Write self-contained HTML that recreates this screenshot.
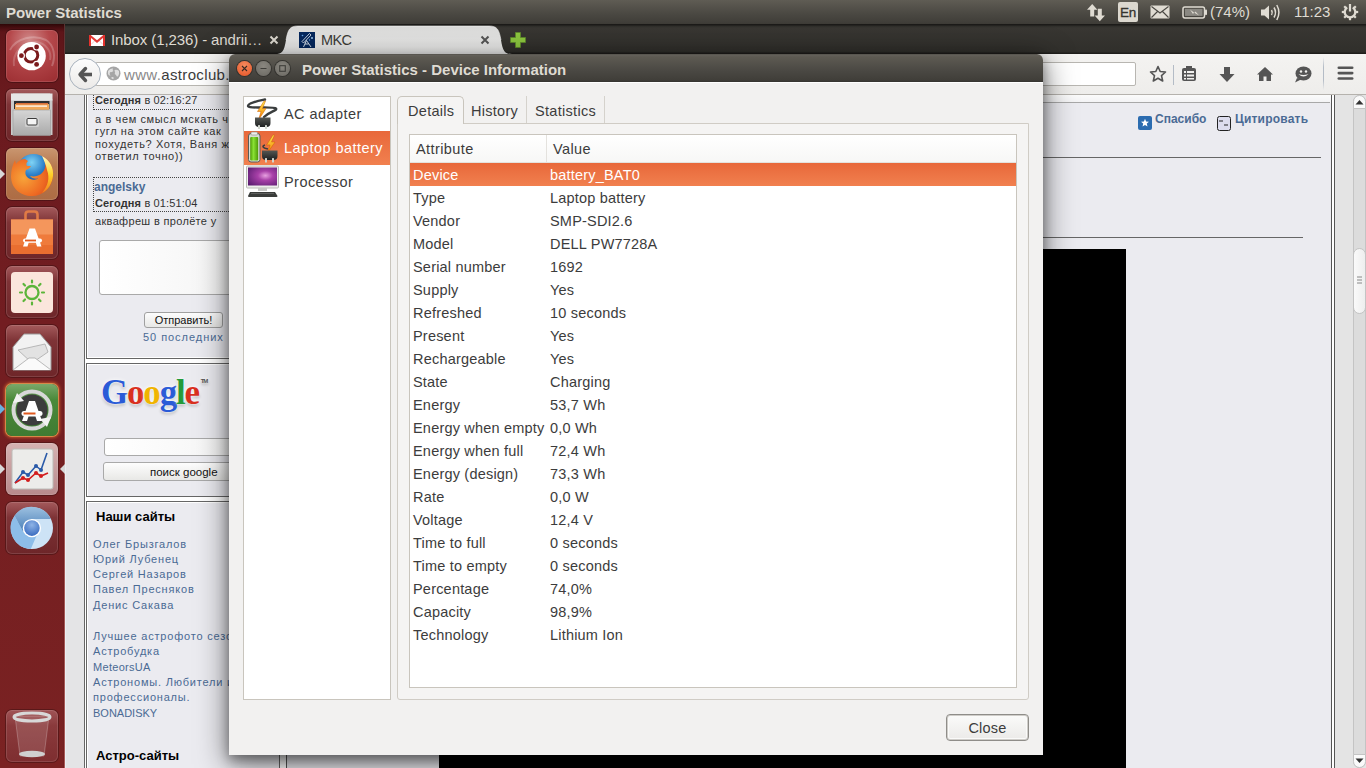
<!DOCTYPE html>
<html><head><meta charset="utf-8">
<style>
*{margin:0;padding:0;box-sizing:border-box}
html,body{width:1366px;height:768px;overflow:hidden;background:#000;font-family:"Liberation Sans",sans-serif}
.a{position:absolute}
svg{display:block}
/* panel */
#panel{left:0;top:0;width:1366px;height:24px;background:linear-gradient(#5f5c54,#4b4943 55%,#3e3c37)}
#panel .t{position:absolute;font-weight:bold;color:#dfdbd2;font-size:15px;top:4px;left:6px;white-space:nowrap}
#panel .pt{position:absolute;color:#dfdbd2;font-size:15px;top:3px;white-space:nowrap}
/* launcher */
#launcher{left:0;top:24px;width:65px;height:744px;background:linear-gradient(#2e0707 0,#4a0e11 4px,#5e1519 8px,#6a1a1e 70px,#721d21 40%,#7a2222 100%)}
.tile{position:absolute;left:6px;width:52px;height:52px;border-radius:6px;overflow:hidden;background:linear-gradient(#a45a5c,#7e3336 30%,#6e2629);box-shadow:inset 0 0 0 1px rgba(255,255,255,.12),0 0 0 1px rgba(0,0,0,.25)}
.tile svg{position:absolute;left:0;top:0}
/* firefox */
#tabbar{left:65px;top:24px;width:1301px;height:30px;background:linear-gradient(#1c1b19 0,#1c1b19 1px,#2e2d29 2px,#383632 4px,#302f2b 28px,#1f1e1b 29px)}
#navbar{left:65px;top:54px;width:1301px;height:41px;background:linear-gradient(#f4f3f1,#eeedeb);border-bottom:1px solid #b5b2ad}
#content{left:65px;top:95px;width:1301px;height:673px;background:#fff}
.pg{font-size:12px;color:#333;white-space:nowrap}
.lk{color:#4a6a94}
.lk b{color:#4a6a94}
#dlg{left:229px;top:54px;width:814px;height:701px;border-radius:6px 6px 0 0;overflow:hidden}
#dtitle{left:0;top:0;width:814px;height:28px;background:linear-gradient(#4e4c46 0,#64615a 1px,#5d5a52 3px,#4a4843 60%,#403e39 26px,#353430 28px)}
#dbody{left:0;top:28px;width:814px;height:673px;background:#f2f1f0;border-top:1px solid #fff}
#dshadow{left:229px;top:54px;width:814px;height:701px;box-shadow:0 7px 30px 2px rgba(0,0,0,.5),0 5px 12px rgba(0,0,0,.35);border-radius:6px 6px 0 0}
.wb{position:absolute;top:7px;width:15px;height:15px;border-radius:50%;background:radial-gradient(circle at 50% 35%,#8a8780,#6a6862);box-shadow:0 0 0 1px #34332f}
.wb svg{position:absolute;left:0;top:0}
.wb.close{background:radial-gradient(circle at 50% 30%,#f58a5e,#e55325)}
.ttl{position:absolute;left:73px;top:7px;font-size:15px;font-weight:bold;color:#dfdbd2;white-space:nowrap}
#lst{left:243px;top:96px;width:148px;height:604px;background:#fff;border:1px solid #c9c5bd}
.li{position:absolute;left:0;width:146px;height:34px;font-size:14.5px;color:#3c3c3c;line-height:34px;white-space:nowrap}
.li.sel{background:linear-gradient(#e8683a,#f1804f);color:#fff}
.li .ic{position:absolute;left:2px;top:0}
.li span{position:absolute;left:40px;top:0;letter-spacing:.45px}
#tabs{left:397px;top:96px;width:300px;height:28px}
.tab{position:absolute;top:0;height:27px;font-size:14.5px;color:#3c3c3c;line-height:30px;text-align:center;letter-spacing:.3px;border-right:1px solid #d5d2cc}
.tab.act{background:#f5f4f3;border:1px solid #c9c5bd;border-bottom:none;border-radius:5px 5px 0 0;height:28px;z-index:2;line-height:28px;text-align:left;padding-left:10px}
#nbpanel{left:397px;top:123px;width:632px;height:577px;background:#f5f4f3;border:1px solid #d0ccc5;border-radius:0 0 3px 3px}
#tv{left:409px;top:134px;width:608px;height:554px;background:#fff;border:1px solid #c9c5bd;overflow:hidden}
#thead{position:absolute;left:0;top:0;width:606px;height:28px;background:linear-gradient(#fff,#f7f7f6);border-bottom:1px solid #e4e2de;font-size:14.5px;color:#3c3c3c}
#thead span{position:absolute;top:6px;letter-spacing:.4px}
.h1{left:6px}.h2{left:143px}
#thead:after{content:"";position:absolute;left:136px;top:0;width:1px;height:27px;background:#e4e2de}
.tr{position:absolute;left:0;width:606px;height:23px;line-height:23px;font-size:14.5px;color:#3c3c3c;white-space:nowrap}
.tr.sel{background:linear-gradient(#e8683a,#f1804f);color:#fff}
.c1{position:absolute;top:1px;left:3px;letter-spacing:.2px}.c2{position:absolute;top:1px;left:140px;letter-spacing:.2px}
#closebtn{left:946px;top:714px;width:83px;height:27px;border:1px solid #8f8d89;border-radius:4px;background:linear-gradient(#fbfbfa,#ebeae8);box-shadow:inset 0 0 0 1px #cfcdc9,inset 0 0 0 2px #fafaf9;font-size:14.5px;color:#3c3c3c;text-align:center;line-height:27px;letter-spacing:.2px}

</style></head><body>
<div id="panel" class="a">
  <div class="t">Power Statistics</div>
  <svg class="a" style="left:1086px;top:3px" width="20" height="19" viewBox="0 0 20 19">
    <path d="M6.2 1 L1 6.8 H4.2 V13.5 H8.2 V6.8 H11.4Z" fill="#dfdbd2"/>
    <path d="M13.8 18.2 L19 12.4 H15.8 V5.8 H11.8 V12.4 H8.6Z" fill="#dfdbd2"/>
  </svg>
  <div class="a" style="left:1118px;top:2px;width:20px;height:20px;border-radius:2px;background:#dcd8cf;color:#35342f;font-size:13.5px;line-height:21px;text-align:center;letter-spacing:-.3px;-webkit-text-stroke:.3px #35342f">En</div>
  <svg class="a" style="left:1150px;top:5px" width="20" height="14" viewBox="0 0 20 14">
    <rect x="0.5" y="0.5" width="19" height="13" rx="1" fill="#dfdbd2"/>
    <path d="M1.5 1.5 L10 8 L18.5 1.5 M1.5 12.5 L7.5 6.5 M18.5 12.5 L12.5 6.5" fill="none" stroke="#4a4843" stroke-width="1.1"/>
  </svg>
  <svg class="a" style="left:1182px;top:6px" width="26" height="13" viewBox="0 0 26 13">
    <rect x="1" y="0.9" width="21.5" height="11" rx="1.8" fill="none" stroke="#dfdbd2" stroke-width="1.5"/>
    <rect x="23" y="3.5" width="2" height="5.5" rx=".8" fill="#dfdbd2"/>
    <rect x="3" y="2.9" width="17.5" height="7" fill="#8a8882"/>
    <path d="M8 3.5 L12.5 7 L13.5 5.5 L17 9.5 L12 6.5 L11 8Z" fill="#dfdbd2"/>
  </svg>
  <div class="pt" style="left:1210px">(74%)</div>
  <svg class="a" style="left:1260px;top:4px" width="21" height="17" viewBox="0 0 21 17">
    <path d="M1 5.5 H4.5 L9 1.5 V15.5 L4.5 11.5 H1Z" fill="#dfdbd2"/>
    <path d="M11.5 6 Q13 8.5 11.5 11" fill="none" stroke="#dfdbd2" stroke-width="1.5"/>
    <path d="M14 3.5 Q17 8.5 14 13.5" fill="none" stroke="#dfdbd2" stroke-width="1.5"/>
    <path d="M16.8 1 Q21 8.5 16.8 16" fill="none" stroke="#dfdbd2" stroke-width="1.5"/>
  </svg>
  <div class="pt" style="left:1294px">11:23</div>
  <svg class="a" style="left:1341px;top:3px" width="18" height="18" viewBox="0 0 18 18">
    <g fill="#dfdbd2"><rect x="7.9" y="0.8" width="2.2" height="3.2" transform="rotate(45 9 9)"/><rect x="7.9" y="0.8" width="2.2" height="3.2" transform="rotate(90 9 9)"/><rect x="7.9" y="0.8" width="2.2" height="3.2" transform="rotate(135 9 9)"/><rect x="7.9" y="0.8" width="2.2" height="3.2" transform="rotate(180 9 9)"/><rect x="7.9" y="0.8" width="2.2" height="3.2" transform="rotate(225 9 9)"/><rect x="7.9" y="0.8" width="2.2" height="3.2" transform="rotate(270 9 9)"/><rect x="7.9" y="0.8" width="2.2" height="3.2" transform="rotate(315 9 9)"/></g>
    <path d="M6.2 4.6 A5.3 5.3 0 1 0 11.8 4.6" fill="none" stroke="#dfdbd2" stroke-width="2.3"/>
    <rect x="7.9" y="1" width="2.2" height="7.5" fill="#dfdbd2"/>
  </svg>
</div>
<div id="launcher" class="a">
  <div class="a" style="left:63px;top:0;width:1px;height:744px;background:rgba(0,0,0,.06)"></div><div class="a" style="left:64px;top:0;width:1px;height:744px;background:linear-gradient(#5a3030,#9a5250 15%,#a85a58)"></div>
</div>
<!-- tile 1 ubuntu -->
<div class="tile" style="top:30px;background:radial-gradient(circle at 45% 20%,#d08a8a 0,#b5484b 40%,#9a2c30 100%)">
  <svg width="52" height="52" viewBox="0 0 52 52">
    <path d="M4 20 C10 8 28 4 40 10 C48 15 50 26 46 36" fill="none" stroke="rgba(255,255,255,.22)" stroke-width="2"/>
    <path d="M8 36 C6 24 16 12 30 12 C40 13 46 22 44 30" fill="none" stroke="rgba(255,255,255,.18)" stroke-width="2"/>
    <circle cx="25.6" cy="26.1" r="14.2" fill="#fff"/>
    <circle cx="25" cy="25.3" r="6.8" fill="none" stroke="#7a1a1c" stroke-width="3"/>
    <circle cx="30.6" cy="17" r="3.6" fill="#fff"/><circle cx="15.4" cy="25.7" r="3.6" fill="#fff"/><circle cx="30.6" cy="34.4" r="3.6" fill="#fff"/>
    <circle cx="30.6" cy="17" r="2.4" fill="#7a1a1c"/>
    <circle cx="15.4" cy="25.7" r="2.4" fill="#7a1a1c"/>
    <circle cx="30.6" cy="34.4" r="2.4" fill="#7a1a1c"/>
  </svg>
</div>
<!-- tile 2 files -->
<div class="tile" style="top:89px">
  <svg width="52" height="52" viewBox="0 0 52 52">
    <defs><linearGradient id="cab" x1="0" y1="0" x2="0" y2="1"><stop offset="0" stop-color="#d6d6d6"/><stop offset="1" stop-color="#a9a9a9"/></linearGradient></defs>
    <path d="M7 4.5 H44 L46.5 11 V46 H5 V11Z" fill="#c9c9c9"/>
    <rect x="5" y="4.5" width="41.5" height="7" fill="#e6e6e6"/>
    <rect x="8" y="12" width="35.5" height="8" fill="#2e3032"/>
    <rect x="9" y="15" width="34" height="6" fill="#f0a95a"/>
    <rect x="10" y="16.5" width="31" height="1.2" fill="#fff"/>
    <rect x="10" y="14" width="32" height="1.5" fill="#d9703a"/>
    <rect x="7" y="21" width="37.5" height="25.5" fill="url(#cab)" stroke="#9a9a9a" stroke-width=".6"/>
    <rect x="19" y="27.5" width="14" height="10.5" rx="1.5" fill="#d0d0d0"/>
    <rect x="21" y="29.5" width="10" height="6.5" rx="1" fill="#f4f4f4" stroke="#3a3a3a" stroke-width="1"/>
  </svg>
</div>
<!-- tile 3 firefox -->
<div class="tile" style="top:148px;background:linear-gradient(#c99670,#b87a50 35%,#ad6c44)">
  <svg width="52" height="52" viewBox="0 0 52 52">
    <defs><radialGradient id="fxb" cx=".45" cy=".25" r=".75"><stop offset="0" stop-color="#7fd3f5"/><stop offset=".5" stop-color="#2b7fc8"/><stop offset="1" stop-color="#142f7a"/></radialGradient>
    <radialGradient id="fxo" cx=".3" cy=".55" r=".8"><stop offset="0" stop-color="#f7a43a"/><stop offset=".6" stop-color="#ee6a22"/><stop offset="1" stop-color="#d0401c"/></radialGradient>
    <linearGradient id="fxy" x1="0" y1="0" x2="0" y2="1"><stop offset="0" stop-color="#fff8c0"/><stop offset=".5" stop-color="#ffd028"/><stop offset="1" stop-color="#f08020"/></linearGradient></defs>
    <circle cx="27.5" cy="23" r="17" fill="url(#fxb)"/>
    <path d="M36 8 C44 12 48 20 47 28 C46 40 37 48 26 48 C14 48 5 40 5 28 C5 22 7 16 9 12 L10 16 C12 13 15 11 19 11 L22 13 C20 15 20 17 21 18 L25 18 C24 20 22 21 20 22 C18 26 21 31 26 31.5 C29 32 31 31.5 32 30.5 C29 31 25 30 24 28 C28 29 32 28 35 26 C40 22 41 15 36 8Z" fill="url(#fxo)"/>
    <path d="M36 8 C44 12 48 20 47 28 C46 36 42 42 36 45 C42 38 44 30 41 22 C40 17 38 12 36 8Z" fill="url(#fxy)"/>
  </svg>
</div>
<!-- tile 4 software center -->
<div class="tile" style="top:207px">
  <svg width="52" height="52" viewBox="0 0 52 52">
    <path d="M19.5 13 V7.5 Q19.5 4.5 22.5 4.5 H28.5 Q31.5 4.5 31.5 7.5 V13" fill="none" stroke="#e07a45" stroke-width="2.6"/>
    <rect x="5" y="12.5" width="42" height="34.5" fill="#ef7b3c"/>
    <rect x="5" y="12.5" width="42" height="15" fill="#f4965c"/>
    <rect x="5" y="38" width="42" height="9" fill="#e96e30"/>
    <path d="M23.5 21.5 H29 L35.5 39.5 H31 L29.8 35.5 H22.7 L21.5 39.5 H17Z" fill="#fff"/>
    <rect x="17" y="31.5" width="19" height="4" rx="2" fill="#fff"/>
    <rect x="19" y="32.6" width="11" height="1.8" fill="#e05a20"/>
  </svg>
</div>
<!-- tile 5 brightness -->
<div class="tile" style="top:266px">
  <svg width="52" height="52" viewBox="0 0 52 52">
    <rect x="5" y="6" width="42" height="41" rx="4" fill="#fbe6dc"/>
    <circle cx="26" cy="26.5" r="6.5" fill="none" stroke="#5cb53a" stroke-width="2.3"/>
    <g stroke="#5cb53a" stroke-width="2.2" stroke-linecap="round">
      <path d="M26 14.5V16.5M26 36.5V38.5M14 26.5H16M36 26.5H38M17.5 18L19 19.5M33 33.5L34.5 35M17.5 35L19 33.5M33 19.5L34.5 18"/>
    </g>
  </svg>
</div>
<!-- tile 6 mail -->
<div class="tile" style="top:325px">
  <svg width="52" height="52" viewBox="0 0 52 52">
    <path d="M7 22 L18 9 H34 L45 22 V45 H7Z" fill="#f2f2f2" stroke="#9a9a9a" stroke-width="1"/>
    <path d="M12 25 L39 19 L42 27 L26 38 Z" fill="#e2e2e2" stroke="#aaa" stroke-width=".8"/>
    <path d="M7 45 L23 33 H29 L45 45" fill="#fafafa" stroke="#aaa" stroke-width=".8"/>
  </svg>
</div>
<!-- tile 7 updater -->
<div class="tile" style="top:384px;background:linear-gradient(#7aa86a,#4a8a3a 30%,#3f7b32);box-shadow:0 0 0 1px #d88848,0 0 3px 2px #b8502a">
  <svg width="52" height="52" viewBox="0 0 52 52">
    <circle cx="26" cy="26" r="18.5" fill="none" stroke="#d8d8d8" stroke-width="4"/>
    <circle cx="26" cy="26" r="15.5" fill="#3c3c3c"/>
    <path d="M7 19 L11 9 L18 17Z" fill="#f2f2f2"/>
    <path d="M45 33 L41 43 L34 35Z" fill="#f2f2f2"/>
    <path d="M23 17 H29 L36 37 H31 L29.5 32.5 H22.5 L21 37 H16Z" fill="#fff"/>
    <rect x="15.5" y="27" width="21" height="5" rx="2.5" fill="#fff"/>
    <rect x="17.5" y="28.5" width="12" height="2" fill="#e05a20"/>
  </svg>
</div>
<!-- tile 8 power statistics (active) -->
<div class="tile" style="top:443px;background:linear-gradient(#d6b2b2,#b88a8c)">
  <svg width="52" height="52" viewBox="0 0 52 52">
    <rect x="6" y="6" width="41" height="40" rx="2" fill="#ececea" stroke="#bcbcb8" stroke-width="1"/>
    <path d="M9 40 L17 29 L22 32 L30 23 L35 27 L41 10" fill="none" stroke="#2a5aa8" stroke-width="1.6"/>
    <path d="M9 40 L17 35 L22 37 L30 30 L35 33 L42 30" fill="none" stroke="#d21d1d" stroke-width="1.6"/>
    <g fill="#2a5aa8"><circle cx="17" cy="29" r="2"/><circle cx="22" cy="32" r="2"/><circle cx="30" cy="23" r="2"/><circle cx="35" cy="27" r="2"/></g>
    <g fill="#d21d1d"><circle cx="17" cy="35" r="2"/><circle cx="22" cy="37" r="2"/><circle cx="30" cy="30" r="2"/><circle cx="35" cy="33" r="2"/></g>
  </svg>
</div>
<!-- tile 9 chromium -->
<div class="tile" style="top:502px">
  <svg width="52" height="52" viewBox="0 0 52 52">
    <defs><linearGradient id="crt" x1="0" y1="0" x2="0" y2="1"><stop offset="0" stop-color="#9cc0e0"/><stop offset="1" stop-color="#4a7fb8"/></linearGradient>
    <radialGradient id="crc" cx=".5" cy=".3" r=".7"><stop offset="0" stop-color="#8fb4e6"/><stop offset="1" stop-color="#3a6cc0"/></radialGradient></defs>
    <g transform="translate(0,1.3)">
    <circle cx="25.9" cy="24.7" r="21.1" fill="#cde3f6"/>
    <path d="M8.5 12.5 L17.2 28.5 L31.2 31 L24.8 45.8 A21.1 21.1 0 0 1 8.5 12.5Z" fill="#8dbde9"/>
    <path d="M8.5 12.5 A21.1 21.1 0 0 1 44.9 15.8 L25.9 15.8 L17.2 28.5Z" fill="url(#crt)"/>
    <circle cx="25.9" cy="24.8" r="9.2" fill="#fff"/>
    <circle cx="25.9" cy="24.8" r="7.8" fill="url(#crc)"/>
    </g>
  </svg>
</div>
<!-- trash -->
<div class="tile" style="top:710px;background:linear-gradient(#a05456,#8a3a3c 30%,#7e2e30)">
  <svg width="52" height="52" viewBox="0 0 52 52">
    <path d="M9 6 L14 46 H38 L43 6Z" fill="rgba(255,255,255,.12)" stroke="rgba(255,255,255,.3)" stroke-width=".8"/>
    <ellipse cx="26" cy="7" rx="18" ry="4" fill="none" stroke="#d8d8d8" stroke-width="3"/>
    <ellipse cx="26" cy="44" rx="13" ry="3.2" fill="#d0d0d0"/>
  </svg>
</div>
<!-- launcher arrows -->
<svg class="a" style="left:0;top:169px" width="6" height="10" viewBox="0 0 6 10"><path d="M0 0 L5 5 L0 10Z" fill="#d8d8d8"/></svg>
<svg class="a" style="left:0;top:404px" width="6" height="10" viewBox="0 0 6 10"><path d="M0 0 L5 5 L0 10Z" fill="#6ab0e0"/></svg>
<svg class="a" style="left:0;top:464px" width="6" height="10" viewBox="0 0 6 10"><path d="M0 0 L5 5 L0 10Z" fill="#d8d8d8"/></svg>
<svg class="a" style="left:59px;top:464px" width="6" height="10" viewBox="0 0 6 10"><path d="M6 0 L1 5 L6 10Z" fill="#d8d8d8"/></svg>
<div id="tabbar" class="a"></div>
<!-- inbox tab -->
<svg class="a" style="left:89px;top:35px" width="16" height="11" viewBox="0 0 16 11"><rect width="16" height="11" fill="#fff"/><path d="M2 2 L8 7 L14 2 M2 9.5 L6 5.5 M14 9.5 L10 5.5" fill="none" stroke="#f2b8b8" stroke-width=".8"/><path d="M1 0.8 L8 6.6 L15 0.8" fill="none" stroke="#e03a36" stroke-width="2"/><rect width="2" height="11" fill="#e5322d"/><rect x="14" width="2" height="11" fill="#e5322d"/></svg>
<div class="a" style="left:111px;top:31px;font-size:15px;color:#dfdbd2;white-space:nowrap;letter-spacing:-.1px">Inbox (1,236) - andrii…</div>
<svg class="a" style="left:269px;top:35px" width="10" height="10" viewBox="0 0 10 10"><path d="M1.5 1.5L8.5 8.5M8.5 1.5L1.5 8.5" stroke="#dfdbd2" stroke-width="2"/></svg>
<!-- active tab -->
<svg class="a" style="left:270px;top:25px" width="250" height="30" viewBox="0 0 250 30">
  <defs><linearGradient id="tabg" x1="0" y1="0" x2="0" y2="1"><stop offset="0" stop-color="#d9d9d8"/><stop offset=".5" stop-color="#e6e6e5"/><stop offset="1" stop-color="#efefee"/></linearGradient></defs>
  <path d="M5 29 C12 29 14 27 16 15 C18 4 20 1 28 1 H219 C227 1 229 4 231 15 C233 27 235 29 242 29Z" fill="url(#tabg)"/><path d="M16 15 C18 4 20 1 28 1 H219 C227 1 229 4 231 15" fill="none" stroke="rgba(255,255,255,.5)" stroke-width="1"/>
</svg>
<svg class="a" style="left:299px;top:32px" width="16" height="16" viewBox="0 0 16 16"><rect width="16" height="16" fill="#06285e"/><path d="M3 9.5 L10.5 1.5 L12 3 L4.5 11Z" fill="none" stroke="#d8e0ea" stroke-width=".9"/><path d="M4.5 15 L7.5 8.5 L12 15 M6 12 H9.5" fill="none" stroke="#e8eef5" stroke-width=".9"/><circle cx="3.5" cy="3.5" r=".8" fill="#6aa8e8"/><circle cx="13" cy="6" r="1" fill="#9cc8f0"/><circle cx="10.5" cy="8" r=".7" fill="#6aa8e8"/></svg>
<div class="a" style="left:321px;top:32px;font-size:14.5px;color:#3c3b37;white-space:nowrap;letter-spacing:-.6px">MKC</div>
<svg class="a" style="left:480px;top:35px" width="10" height="10" viewBox="0 0 10 10"><path d="M1.5 1.5L8.5 8.5M8.5 1.5L1.5 8.5" stroke="#555" stroke-width="2"/></svg>
<svg class="a" style="left:510px;top:32px" width="16" height="16" viewBox="0 0 16 16"><path d="M5.5 0.5 H10.5 V5.5 H15.5 V10.5 H10.5 V15.5 H5.5 V10.5 H0.5 V5.5 H5.5Z" fill="#8cc63f" stroke="#5e8a2a" stroke-width=".8"/></svg>
<!-- nav bar -->
<div id="navbar" class="a"></div>
<div class="a" style="left:95px;top:62px;width:1041px;height:24px;background:#fff;border:1px solid #b8b6b1;border-radius:2px"></div>
<div class="a" style="left:69px;top:58px;width:32px;height:32px;border-radius:50%;background:linear-gradient(#fdfdfd,#eceae8);border:1px solid #a8b2bd;"></div>
<svg class="a" style="left:77px;top:66px" width="17" height="17" viewBox="0 0 17 17"><path d="M8.5 2.5 L3 8.5 L8.5 14.5" fill="none" stroke="#555" stroke-width="3.4" stroke-linejoin="round" stroke-linecap="round"/><path d="M4 8.5 H15" stroke="#555" stroke-width="3.6"/></svg>
<svg class="a" style="left:106px;top:66px" width="15" height="15" viewBox="0 0 15 15"><circle cx="7.5" cy="7.5" r="7" fill="#a5a5a5"/><path d="M2 5 Q4 2 7 2.5 Q6 4 7.5 5 Q6 6.5 4 6 Q3 8 4.5 9.5 Q3 10 2 8Z M8.5 4 Q11 3 13 5 Q13.5 8 12 10.5 Q10.5 11 10 9 Q8 8 9 6.5Z M5.5 11 Q7 10.5 8 12 Q7 13.5 5.5 12.5Z" fill="#dedede"/></svg>
<div class="a" style="left:124px;top:66px;font-size:15px;color:#8a8a8a;white-space:nowrap;letter-spacing:.35px">www.<span style="color:#3c3c3c">astroclub.</span></div>
<!-- nav icons right -->
<svg class="a" style="left:1149px;top:65px" width="18" height="18" viewBox="0 0 18 18"><path d="M9 1.5 L11.2 6.5 L16.5 7 L12.5 10.6 L13.7 16 L9 13.2 L4.3 16 L5.5 10.6 L1.5 7 L6.8 6.5Z" fill="none" stroke="#555" stroke-width="1.6" stroke-linejoin="round"/></svg>
<div class="a" style="left:1173px;top:65px;width:1px;height:20px;background:#b4bcc6"></div>
<svg class="a" style="left:1181px;top:65px" width="16" height="17" viewBox="0 0 16 17"><rect x="1" y="3" width="14" height="13" rx="2" fill="#555"/><rect x="5" y="1" width="6" height="3" fill="#555"/><g fill="#f2f1ef"><rect x="3" y="6" width="2" height="2"/><rect x="6" y="6" width="7" height="2"/><rect x="3" y="9.5" width="2" height="2"/><rect x="6" y="9.5" width="7" height="2"/><rect x="3" y="13" width="2" height="1.5"/><rect x="6" y="13" width="7" height="1.5"/></g></svg>
<svg class="a" style="left:1219px;top:66px" width="16" height="17" viewBox="0 0 16 17"><path d="M5 1 H11 V8 H15.5 L8 16 L0.5 8 H5Z" fill="#555"/></svg>
<svg class="a" style="left:1256px;top:66px" width="18" height="16" viewBox="0 0 18 16"><path d="M9 1 L1 8.5 L3 8.5 V15 H7.5 V10.5 H10.5 V15 H15 V8.5 H17Z" fill="#555"/><path d="M9 3.5 L4.5 8 V13.5 H6 V9 H12 V13.5 H13.5 V8Z" fill="#f2f1ef" opacity=".0"/></svg>
<svg class="a" style="left:1294px;top:66px" width="18" height="17" viewBox="0 0 18 17"><ellipse cx="9.5" cy="7.5" rx="8" ry="7" fill="#555"/><path d="M3 12 L1 16.5 L7 13.5Z" fill="#555"/><circle cx="7" cy="5.5" r="1.2" fill="#f2f1ef"/><circle cx="12" cy="5.5" r="1.2" fill="#f2f1ef"/><path d="M4.5 8 Q9.5 13 14.5 8 Q9.5 10 4.5 8Z" fill="#f2f1ef"/></svg>
<div class="a" style="left:1323px;top:57px;width:1px;height:33px;background:linear-gradient(rgba(180,190,200,0),#b4bcc6 30%,#b4bcc6 70%,rgba(180,190,200,0))"></div>
<svg class="a" style="left:1337px;top:66px" width="17" height="15" viewBox="0 0 17 15"><g fill="#555"><rect x="0.5" y="0.5" width="16" height="2.6" rx="1.3"/><rect x="0.5" y="5.8" width="16" height="2.6" rx="1.3"/><rect x="0.5" y="11.2" width="16" height="2.6" rx="1.3"/></g></svg>
<!-- content -->
<div id="content" class="a"></div>
<div class="a" style="left:65px;top:95px;width:19px;height:673px;background:#e4e4e6;border-left:1px solid #eceef2"></div>
<div class="a" style="left:84px;top:95px;width:1px;height:673px;background:#666"></div>
<!-- left col right border lines -->
<div class="a" style="left:279px;top:95px;width:1px;height:673px;background:#555"></div>
<div class="a" style="left:286px;top:95px;width:1px;height:673px;background:#555"></div>
<div class="a" style="left:287px;top:95px;width:1044px;height:673px;background:#ebebf0"></div>
<!-- box1 chat -->
<div class="a" style="left:86px;top:95px;width:194px;height:264px;background:#ebebf0;border:1px solid #666;border-top:none;box-shadow:inset 1px -1px 0 #fff"></div>
<div class="a" style="left:93px;top:95px;width:140px;height:15px;border:1px dotted #444;border-top:none;border-right:none"></div>
<div class="a pg" style="left:95px;top:94px;font-size:11px;letter-spacing:.15px"><b>Сегодня</b> в 02:16:27</div>
<div class="a pg" style="left:95px;top:113px;line-height:12.4px;font-size:11px;letter-spacing:.62px">а в чем смысл мскать через<br>гугл на этом сайте как<br>похудеть? Хотя, Ваня же<br>ответил точно))</div>
<div class="a" style="left:93px;top:177px;width:140px;height:35px;border:1px dotted #444;border-right:none"></div>
<div class="a pg lk" style="left:94px;top:180px"><b>angelsky</b></div>
<div class="a pg" style="left:95px;top:197px;font-size:11px;letter-spacing:.15px"><b>Сегодня</b> в 01:51:04</div>
<div class="a pg" style="left:95px;top:215px;font-size:11px;letter-spacing:.33px">аквафреш в пролёте у</div>
<div class="a" style="left:99px;top:240px;width:140px;height:55px;background:linear-gradient(90deg,#fff,#f4f4f4);border:1px solid #a9a9a9;border-radius:3px"></div>
<div class="a" style="left:144px;top:312px;width:79px;height:16px;background:linear-gradient(#fdfdfd,#e8e8e6);border:1px solid #a0a0a0;border-radius:3px;font-size:11px;color:#111;text-align:center;line-height:14px">Отправить!</div>
<div class="a pg lk" style="left:143px;top:331px;letter-spacing:.95px;font-size:11px">50 последних</div>
<!-- box2 google -->
<div class="a" style="left:86px;top:363px;width:194px;height:134px;background:#ebebf0;border:1px solid #666;box-shadow:inset 1px 1px 0 #fff"></div>
<div class="a" style="left:101px;top:373px;font-family:'Liberation Serif',serif;font-size:35px;font-weight:bold;letter-spacing:-1.2px;white-space:nowrap;text-shadow:0 0 2px #fff,0 0 4px #fff,0 2px 3px rgba(0,0,0,.3)"><span style="color:#2a5bd7">G</span><span style="color:#d9301f">o</span><span style="color:#f0b400">o</span><span style="color:#2a5bd7">g</span><span style="color:#239a3a">l</span><span style="color:#d9301f">e</span><sup style="font-size:6px;color:#555;font-family:'Liberation Sans';font-weight:bold;vertical-align:21px;margin-left:2px">TM</sup></div>
<div class="a" style="left:104px;top:438px;width:140px;height:18px;background:linear-gradient(90deg,#fff,#f4f4f4);border:1px solid #a9a9a9;border-radius:3px"></div>
<div class="a" style="left:103px;top:462px;width:140px;height:19px;background:linear-gradient(#fdfdfd,#e8e8e6);border:1px solid #a9a9a9;border-radius:3px"></div>
<div class="a" style="left:150px;top:466px;font-size:11.5px;color:#111;white-space:nowrap">поиск google</div>
<!-- box3 links -->
<div class="a" style="left:86px;top:501px;width:194px;height:267px;background:#ebebf0;border:1px solid #666;border-bottom:none;box-shadow:inset 1px 1px 0 #fff"></div>
<div class="a" style="left:96px;top:509px;font-size:13px;font-weight:bold;color:#000;white-space:nowrap">Наши сайты</div>
<div class="a pg lk" style="left:93px;top:536.5px;line-height:15.3px;letter-spacing:.8px;font-size:11px">Олег Брызгалов<br>Юрий Лубенец<br>Сергей Назаров<br>Павел Пресняков<br>Денис Сакава</div>
<div class="a pg lk" style="left:93px;top:629px;line-height:15.35px;letter-spacing:.8px;font-size:11px">Лучшее астрофото сезона<br>Астробудка<br><span style="letter-spacing:.3px">MeteorsUA</span><br>Астрономы. Любители и<br>профессионалы.<br><span style="letter-spacing:0">BONADISKY</span></div>
<div class="a" style="left:96px;top:748px;font-size:13px;font-weight:bold;color:#000;white-space:nowrap">Астро-сайты</div>
<!-- right column -->
<div class="a" style="left:287px;top:95px;width:1044px;height:8px;background:linear-gradient(#fbfbfb,#f2f2f4)"></div>
<div class="a" style="left:287px;top:102px;width:1043px;height:1px;background:#a8a8a8"></div>
<svg class="a" style="left:1138px;top:116px" width="14" height="14" viewBox="0 0 14 14"><rect width="14" height="14" rx="2" fill="#2b6cb0"/><path d="M7 2.8 L8.1 5.5 L11 5.7 L8.8 7.6 L9.5 10.5 L7 8.9 L4.5 10.5 L5.2 7.6 L3 5.7 L5.9 5.5Z" fill="#fff"/></svg>
<div class="a pg lk" style="left:1155px;top:112px"><b>Спасибо</b></div>
<svg class="a" style="left:1217px;top:116px" width="14" height="15" viewBox="0 0 14 15"><rect x=".5" y=".5" width="13" height="14" rx="2" fill="#dde" stroke="#222" stroke-width="1"/><path d="M3 4V6M5 4V6M8 8V10M10 8V10" stroke="#222" stroke-width="1"/></svg>
<div class="a pg lk" style="left:1235px;top:112px"><b style="letter-spacing:.2px">Цитировать</b></div>
<div class="a" style="left:287px;top:157px;width:1034px;height:1px;background:#666"></div>
<div class="a" style="left:287px;top:237px;width:1016px;height:1px;background:#666"></div>
<div class="a" style="left:439px;top:249px;width:687px;height:519px;background:#000"></div>
<!-- page right border + scrollbar -->
<div class="a" style="left:1331px;top:95px;width:1px;height:673px;background:#555"></div>
<div class="a" style="left:1332px;top:95px;width:2px;height:673px;background:#fff"></div>
<div class="a" style="left:1334px;top:95px;width:1px;height:673px;background:#555"></div>
<div class="a" style="left:1335px;top:95px;width:31px;height:673px;background:#e4e4e4"></div>
<div class="a" style="left:1353px;top:95px;width:13px;height:673px;background:#dcdcdc;border:1px solid #c4c4c4;border-radius:7px;"></div>
<div class="a" style="left:1353px;top:95px;width:13px;height:14px;background:#fafafa;border:1px solid #c4c4c4;border-radius:7px 7px 0 0"></div>
<svg class="a" style="left:1355px;top:99px" width="9" height="6" viewBox="0 0 9 6"><path d="M0.5 5.5 L4.5 1 L8.5 5.5Z" fill="#333"/></svg>
<div class="a" style="left:1353px;top:248px;width:13px;height:66px;background:linear-gradient(90deg,#fafafa,#eeeeee);border:1px solid #c4c4c4;border-radius:7px"></div>
<svg class="a" style="left:1357px;top:276px" width="5" height="8" viewBox="0 0 5 8"><path d="M0 1H5M0 4H5M0 7H5" stroke="#888" stroke-width="1"/></svg>
<div class="a" style="left:1353px;top:754px;width:13px;height:14px;background:#fafafa;border:1px solid #c4c4c4;border-radius:0 0 7px 7px"></div>
<svg class="a" style="left:1355px;top:758px" width="9" height="6" viewBox="0 0 9 6"><path d="M0.5 0.5 L4.5 5 L8.5 0.5Z" fill="#333"/></svg>
<!-- dialog -->
<div id="dshadow" class="a"></div>
<div id="dlg" class="a">
  <div id="dtitle" class="a">
    <div class="wb close" style="left:8px"><svg width="15" height="15" viewBox="0 0 15 15"><path d="M5 5L10 10M10 5L5 10" stroke="#3a2a22" stroke-width="1.1"/></svg></div>
    <div class="wb" style="left:27px"><svg width="15" height="15" viewBox="0 0 15 15"><path d="M4.5 7.5H10.5" stroke="#3f3e3a" stroke-width="1.2"/></svg></div>
    <div class="wb" style="left:46px"><svg width="15" height="15" viewBox="0 0 15 15"><rect x="4.7" y="4.7" width="5.6" height="5.6" fill="none" stroke="#3f3e3a" stroke-width="1.1"/></svg></div>
    <div class="ttl">Power Statistics - Device Information</div>
  </div>
  <div id="dbody" class="a"></div>
</div>
<div id="lst" class="a">
  <div class="li" style="top:0"><svg class="ic" width="34" height="34" viewBox="0 0 34 34">
    <defs><linearGradient id="bolt" x1="0" y1="0" x2="0" y2="1"><stop offset="0" stop-color="#fce94f"/><stop offset="1" stop-color="#f57900"/></linearGradient>
    <linearGradient id="plug" x1="0" y1="0" x2="0" y2="1"><stop offset="0" stop-color="#555753"/><stop offset="1" stop-color="#1f2122"/></linearGradient></defs>
    <path d="M19 2.5 C12 4 2 6 2 9 C2 12 28 9 30 11.5 C31.5 13.5 23 15 18 20" fill="none" stroke="#3a3d3e" stroke-width="2.4" stroke-linecap="round"/>
    <path d="M18 4 L11.5 14.5 L15 14.5 L12.5 23 L20 11.5 L16.5 11.5 L19.5 4Z" fill="url(#bolt)" stroke="#ce5c00" stroke-width=".5"/>
    <path d="M9 20.5 h15.5 v5.5 q0 4 -4 4 h-7.5 q-4 0 -4 -4z" fill="url(#plug)"/>
    <rect x="12" y="28" width="2" height="4" rx=".5" fill="#d3d7cf"/><rect x="19" y="28" width="2" height="4" rx=".5" fill="#d3d7cf"/>
  </svg><span>AC adapter</span></div>
  <div class="li sel" style="top:34px"><svg class="ic" width="34" height="34" viewBox="0 0 34 34">
    <defs><linearGradient id="batg" x1="0" y1="0" x2="1" y2="0"><stop offset="0" stop-color="#4e9a06"/><stop offset=".4" stop-color="#8ae234"/><stop offset="1" stop-color="#4e9a06"/></linearGradient></defs>
    <rect x="2.5" y="2.5" width="11.5" height="28.5" rx="2.5" fill="#d8dcd4" stroke="#5a5c58" stroke-width="1"/>
    <rect x="5" y="1" width="6.5" height="3" rx="1" fill="#eeeeec" stroke="#888a85" stroke-width=".6"/>
    <rect x="4.2" y="6" width="8" height="23.5" rx="1" fill="url(#batg)"/>
    <path d="M27 4 L20.5 14 L24 14 L21.5 22 L29 11 L25.5 11 L28.5 4Z" fill="url(#bolt)" stroke="#ce5c00" stroke-width=".5"/>
    <path d="M19 14 C16 15 16 17 22 18" fill="none" stroke="#3a3d3e" stroke-width="1.6"/>
    <path d="M16 19.5 h15.5 v5.5 q0 4 -4 4 h-7.5 q-4 0 -4 -4z" fill="url(#plug)"/>
    <rect x="19" y="27" width="2" height="4.5" rx=".5" fill="#d3d7cf"/><rect x="26" y="27" width="2" height="4.5" rx=".5" fill="#d3d7cf"/>
  </svg><span>Laptop battery</span></div>
  <div class="li" style="top:68px"><svg class="ic" width="34" height="34" viewBox="0 0 34 34">
    <defs><radialGradient id="purp" cx=".6" cy=".45" r=".75"><stop offset="0" stop-color="#e7a0e0"/><stop offset=".35" stop-color="#a840a8"/><stop offset="1" stop-color="#5a1c70"/></radialGradient></defs>
    <rect x="0.5" y="1" width="32" height="22" rx="1" fill="#eeeeec" stroke="#babdb6" stroke-width="1"/>
    <rect x="2" y="2.5" width="29" height="18" fill="url(#purp)"/>
    <rect x="12" y="23" width="9" height="3" fill="#c8c8c6"/>
    <path d="M4 27 h25 l2.5 4 q0 1 -1 1 h-27.5 q-1 0 -1 -1z" fill="#3a3c3a"/>
    <path d="M5 28.5 h23" stroke="#777" stroke-width=".6"/>
  </svg><span>Processor</span></div>
</div>
<div id="tabs" class="a">
  <div class="tab act" style="left:0;width:67px">Details</div>
  <div class="tab" style="left:66px;width:64px">History</div>
  <div class="tab" style="left:130px;width:78px">Statistics</div>
</div>
<div id="nbpanel" class="a"></div>
<div id="tv" class="a">
  <div id="thead"><span class="h1">Attribute</span><span class="h2">Value</span></div>
<div class="tr sel" style="top:28px"><span class="c1">Device</span><span class="c2">battery_BAT0</span></div>
<div class="tr" style="top:51px"><span class="c1">Type</span><span class="c2">Laptop battery</span></div>
<div class="tr" style="top:74px"><span class="c1">Vendor</span><span class="c2">SMP-SDI2.6</span></div>
<div class="tr" style="top:97px"><span class="c1">Model</span><span class="c2">DELL PW7728A</span></div>
<div class="tr" style="top:120px"><span class="c1">Serial number</span><span class="c2">1692</span></div>
<div class="tr" style="top:143px"><span class="c1">Supply</span><span class="c2">Yes</span></div>
<div class="tr" style="top:166px"><span class="c1">Refreshed</span><span class="c2">10 seconds</span></div>
<div class="tr" style="top:189px"><span class="c1">Present</span><span class="c2">Yes</span></div>
<div class="tr" style="top:212px"><span class="c1">Rechargeable</span><span class="c2">Yes</span></div>
<div class="tr" style="top:235px"><span class="c1">State</span><span class="c2">Charging</span></div>
<div class="tr" style="top:258px"><span class="c1">Energy</span><span class="c2">53,7 Wh</span></div>
<div class="tr" style="top:281px"><span class="c1">Energy when empty</span><span class="c2">0,0 Wh</span></div>
<div class="tr" style="top:304px"><span class="c1">Energy when full</span><span class="c2">72,4 Wh</span></div>
<div class="tr" style="top:327px"><span class="c1">Energy (design)</span><span class="c2">73,3 Wh</span></div>
<div class="tr" style="top:350px"><span class="c1">Rate</span><span class="c2">0,0 W</span></div>
<div class="tr" style="top:373px"><span class="c1">Voltage</span><span class="c2">12,4 V</span></div>
<div class="tr" style="top:396px"><span class="c1">Time to full</span><span class="c2">0 seconds</span></div>
<div class="tr" style="top:419px"><span class="c1">Time to empty</span><span class="c2">0 seconds</span></div>
<div class="tr" style="top:442px"><span class="c1">Percentage</span><span class="c2">74,0%</span></div>
<div class="tr" style="top:465px"><span class="c1">Capacity</span><span class="c2">98,9%</span></div>
<div class="tr" style="top:488px"><span class="c1">Technology</span><span class="c2">Lithium Ion</span></div>
</div>
<div id="closebtn" class="a">Close</div>

</body></html>
